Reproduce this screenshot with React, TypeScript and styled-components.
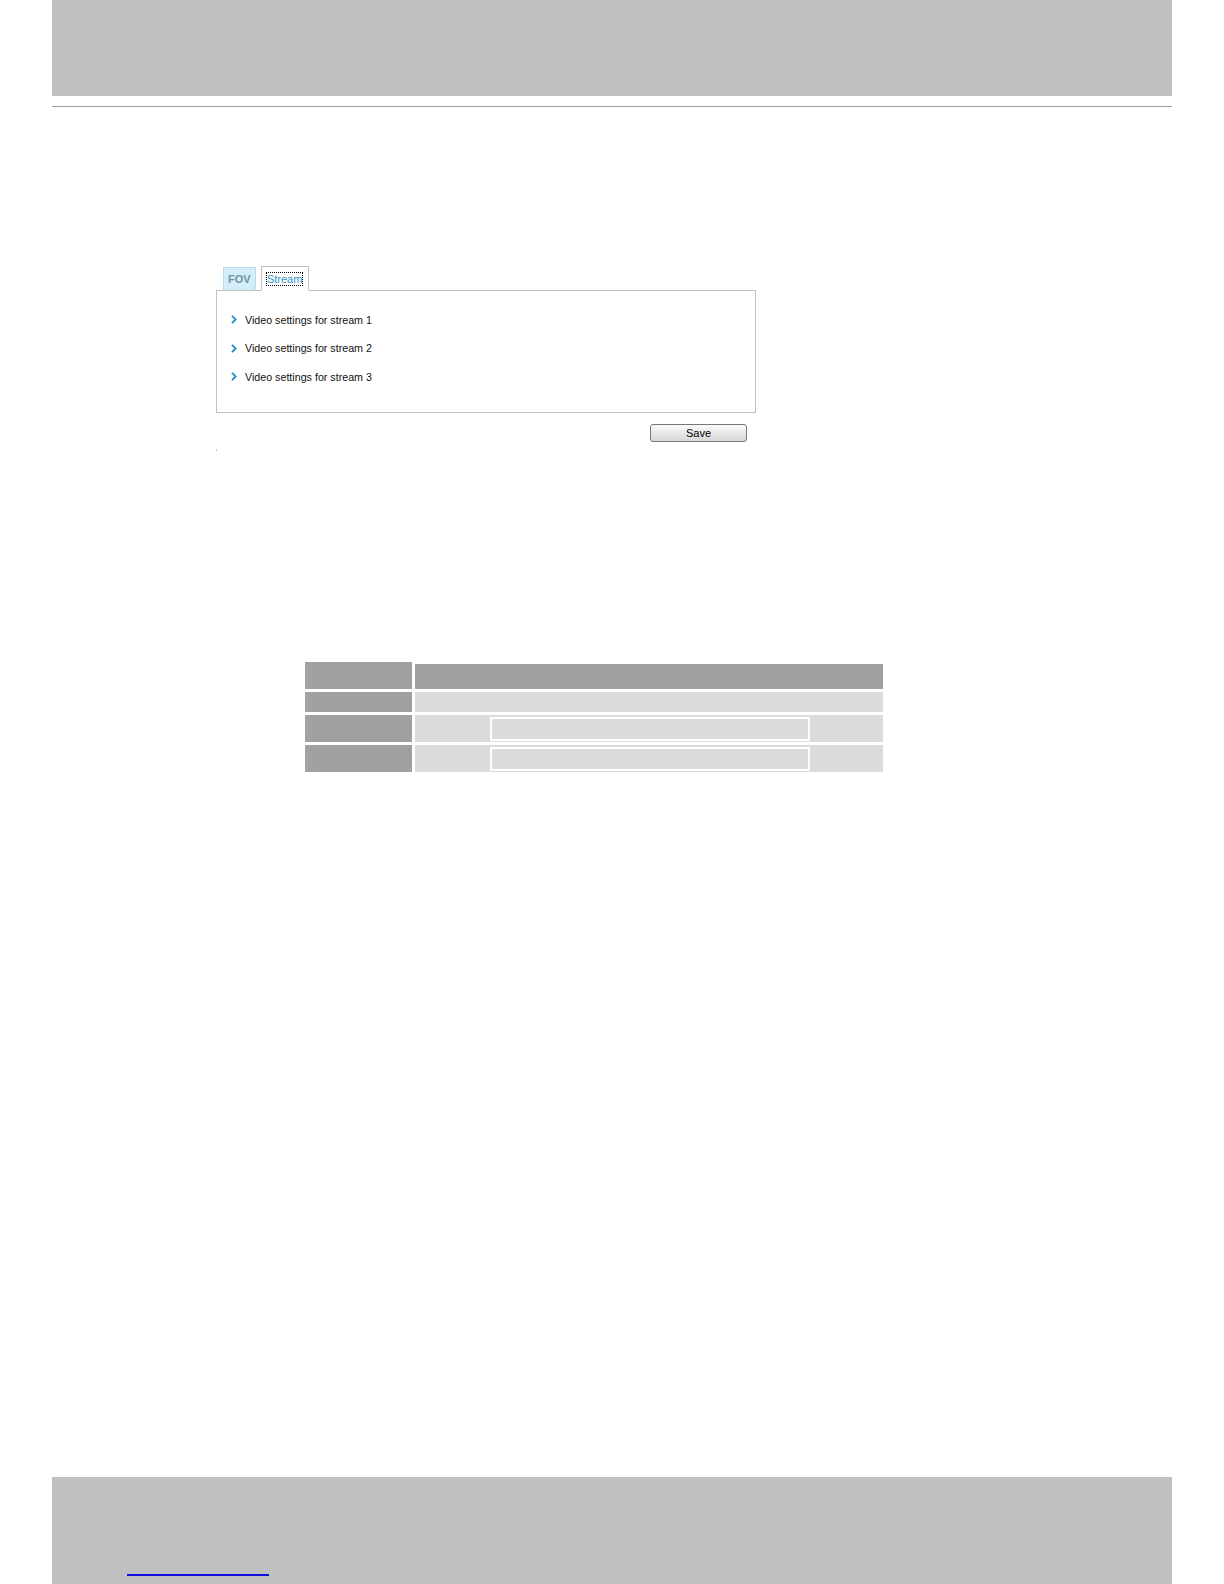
import React from "react";
import styled, { createGlobalStyle } from "styled-components";

const Global = createGlobalStyle`
  html, body { margin: 0; padding: 0; background: #ffffff; }
  body { font-family: "Liberation Sans", Arial, sans-serif; }
`;

const Page = styled.div`
  width: 1224px;
  height: 1584px;
  display: flex;
  flex-direction: column;
  overflow: hidden;
  background: #fff;
`;

const TopBand = styled.div`
  margin: 0 52px;
  height: 96px;
  background: #c0c0c0;
  flex: none;
`;

const Rule = styled.div`
  margin: 10px 52px 0;
  height: 1px;
  background: #a0a0a0;
  flex: none;
`;

const SettingsArea = styled.section`
  margin: 160px 0 0 216px;
  width: 540px;
  display: flex;
  flex-direction: column;
  flex: none;
`;

const TabStrip = styled.div`
  display: flex;
  align-items: flex-end;
  gap: 5px;
  padding-left: 7px;
  height: 24px;
  position: relative;
  z-index: 1;
  margin-bottom: -1px;
`;

const Tab = styled.div<{ $active?: boolean }>`
  box-sizing: border-box;
  height: ${(p) => (p.$active ? "25px" : "24px")};
  padding: 0 4px;
  display: flex;
  align-items: center;
  justify-content: center;
  font-size: 11px;
  font-weight: ${(p) => (p.$active ? 400 : 700)};
  color: ${(p) => (p.$active ? "#2f93c6" : "#6f93a6")};
  background: ${(p) => (p.$active ? "#ffffff" : "#d3edf9")};
  border: 1px solid ${(p) => (p.$active ? "#c0c0c0" : "#b9dcec")};
  border-bottom: ${(p) => (p.$active ? "1px solid #ffffff" : "1px solid #c0c0c0")};
  min-width: ${(p) => (p.$active ? "48px" : "31px")};
`;

const FocusText = styled.span`
  outline: 1px dotted #000;
  outline-offset: 0;
  line-height: 12px;
  padding: 0;
  max-width: 37px;
  overflow: hidden;
  white-space: nowrap;
`;

const Panel = styled.div`
  box-sizing: border-box;
  height: 123px;
  border: 1px solid #c0c0c0;
  padding: 22px 0 0 14px;
  display: flex;
  flex-direction: column;
  gap: 15.5px;
`;

const ItemRow = styled.div`
  display: flex;
  align-items: center;
  gap: 8px;
  height: 13px;
  font-size: 10.7px;
  color: #111;
`;

const Arrow = () => (
  <svg width="6" height="9" viewBox="0 0 6 9">
    <path d="M1 0.8 L4.6 4.5 L1 8.2" fill="none" stroke="#1f8bc2" strokeWidth="1.8" />
    <path d="M0.6 1.6 L3.4 4.5" fill="none" stroke="#8cc6e2" strokeWidth="0.8" />
  </svg>
);

const SaveRow = styled.div`
  display: flex;
  justify-content: flex-end;
  padding-right: 9px;
  margin-top: 11px;
`;

const SaveButton = styled.button`
  box-sizing: border-box;
  width: 97px;
  height: 18px;
  padding: 0;
  border: 1px solid #767676;
  border-radius: 3px;
  background: linear-gradient(#fbfbfb, #e6e6e6 55%, #d9d9d9);
  font-family: "Liberation Sans", Arial, sans-serif;
  font-size: 11px;
  color: #000;
  line-height: 16px;
`;

const Dot = styled.div`
  width: 1px;
  height: 2px;
  background: #c8c8c8;
  margin-top: 7px;
`;

const SpecTable = styled.div`
  margin: 211px 0 0 305px;
  display: grid;
  grid-template-columns: 107px 468px;
  grid-template-rows: 27px 20px 27px 27px;
  column-gap: 3px;
  row-gap: 3px;
  flex: none;
`;

const LabelCell = styled.div`
  background: linear-gradient(90deg, #a3a3a3, #a0a0a0 12%);
`;

const ValueCell = styled.div<{ $head?: boolean }>`
  background: ${(p) => (p.$head ? "#a0a0a0" : "#dcdcdc")};
  ${(p) => (p.$head ? "margin-top: 2px;" : "")}
  display: flex;
  align-items: stretch;
  padding-left: 75px;
`;

const InnerField = styled.div`
  box-sizing: border-box;
  width: 320px;
  margin: 2px 0 1px;
  border: 2px solid #ffffff;
  background: #dcdcdc;
`;

const Footer = styled.footer`
  margin: auto 52px 0;
  height: 107px;
  background: #c0c0c0;
  flex: none;
  display: flex;
  align-items: flex-end;
  padding-left: 75px;
`;

const LinkLine = styled.a`
  display: block;
  width: 142px;
  height: 0;
  border-bottom: 2px solid #1010e0;
  margin-bottom: 8px;
`;

const streams = ["Video settings for stream 1", "Video settings for stream 2", "Video settings for stream 3"];

export default function App() {
  return (
    <>
      <Global />
      <Page>
        <TopBand />
        <Rule />
        <SettingsArea>
          <TabStrip>
            <Tab>FOV</Tab>
            <Tab $active>
              <FocusText>Stream</FocusText>
            </Tab>
          </TabStrip>
          <Panel>
            {streams.map((s) => (
              <ItemRow key={s}>
                <Arrow />
                <span>{s}</span>
              </ItemRow>
            ))}
          </Panel>
          <SaveRow>
            <SaveButton type="button">Save</SaveButton>
          </SaveRow>
          <Dot />
        </SettingsArea>
        <SpecTable>
          <LabelCell />
          <ValueCell $head />
          <LabelCell />
          <ValueCell />
          <LabelCell />
          <ValueCell>
            <InnerField />
          </ValueCell>
          <LabelCell />
          <ValueCell>
            <InnerField />
          </ValueCell>
        </SpecTable>
        <Footer>
          <LinkLine href="#" aria-label="link" />
        </Footer>
      </Page>
    </>
  );
}
